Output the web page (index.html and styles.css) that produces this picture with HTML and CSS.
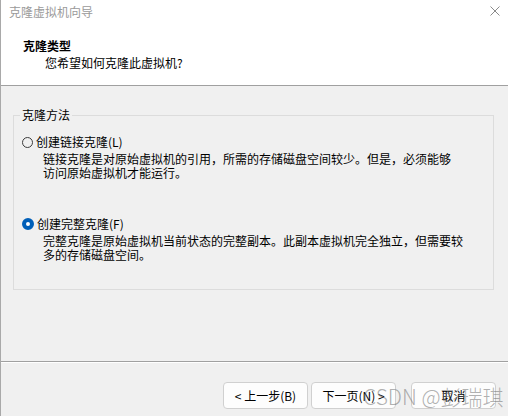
FILE: index.html
```html
<!DOCTYPE html>
<html lang="zh-CN">
<head>
    <meta charset="UTF-8">
    <title>克隆虚拟机向导</title>
    <link rel="stylesheet" href="styles.css">
</head>
<body>
    <div class="window">
        <div class="header">
            <div class="titlebar">
                <span class="title">克隆虚拟机向导</span>
                <svg class="close" width="10" height="10" viewBox="0 0 10 10">
                    <path d="M0.5 0.5 L9.5 9.5 M9.5 0.5 L0.5 9.5" stroke="#8a8a8a" stroke-width="1" fill="none"/>
                </svg>
            </div>
            <div class="heading">
                <div class="heading-title">克隆类型</div>
                <div class="heading-sub">您希望如何克隆此虚拟机?</div>
            </div>
        </div>

        <div class="content">
            <fieldset class="group">
                <legend>克隆方法</legend>

                <div class="option">
                    <div class="radio-row">
                        <span class="radio"></span>
                        <span>创建链接克隆(L)</span>
                    </div>
                    <div class="desc">链接克隆是对原始虚拟机的引用，所需的存储磁盘空间较少。但是，必须能够<br>访问原始虚拟机才能运行。</div>
                </div>

                <div class="option second">
                    <div class="radio-row">
                        <span class="radio checked"></span>
                        <span>创建完整克隆(F)</span>
                    </div>
                    <div class="desc">完整克隆是原始虚拟机当前状态的完整副本。此副本虚拟机完全独立，但需要较<br>多的存储磁盘空间。</div>
                </div>
            </fieldset>
        </div>

        <div class="footer">
            <button class="btn">&lt; 上一步(B)</button>
            <button class="btn">下一页(N) &gt;</button>
            <button class="btn cancel">取消</button>
            <span class="watermark">CSDN @彭瑞琪</span>
        </div>
    </div>
</body>
</html>
```

FILE: styles.css
```css
html, body {
    margin: 0;
    padding: 0;
}
body {
    width: 508px;
    height: 416px;
    overflow: hidden;
    background: #f0f0f0;
    font-family: "Noto Sans CJK SC", "Liberation Sans", sans-serif;
    font-size: 12px;
    color: #000;
}
.window {
    position: relative;
    display: flex;
    flex-direction: column;
    height: 416px;
    border-left: 1px solid #a9a9a9;
    box-sizing: border-box;
}
.header {
    height: 85px;
    background: #fff;
    border-bottom: 1px solid #a0a0a0;
    flex-shrink: 0;
}
.titlebar {
    display: flex;
    align-items: center;
    justify-content: space-between;
    height: 24px;
    padding: 0 8px 0 8px;
}
.title {
    color: #9a9a9a;
    line-height: 24px;
}
.close {
    margin-top: -2px;
}
.heading {
    padding: 14px 0 0 22px;
    line-height: 16px;
}
.heading-title {
    font-weight: bold;
}
.heading-sub {
    margin-left: 22px;
    margin-top: 1px;
}
.content {
    flex: 1;
    padding: 21px 14px 0 12px;
}
.group {
    margin: 0;
    padding: 11px 0 27px 0;
    border: 1px solid #dcdcdc;
}
.group legend {
    margin-left: 6px;
    padding: 0 2px;
    line-height: 16px;
}
.option {
    padding-left: 8px;
}
.option.second {
    margin-top: 36px;
}
.radio-row {
    display: flex;
    align-items: center;
    gap: 3px;
    line-height: 16px;
}
.radio {
    width: 11px;
    height: 11px;
    border: 1px solid #3c3c3c;
    border-radius: 50%;
    box-sizing: border-box;
}
.radio.checked {
    width: 12px;
    height: 12px;
    border: 4px solid #005fb8;
    background: #fff;
}
.desc {
    margin-top: 2px;
    padding-left: 21px;
    line-height: 14px;
}
.footer {
    position: relative;
    height: 55px;
    display: flex;
    justify-content: flex-end;
    align-items: flex-start;
    gap: 3px;
    padding: 20px 12px 0 0;
    box-sizing: border-box;
    border-top: 1px solid #a0a0a0;
    box-shadow: inset 0 1px 0 #fff;
    flex-shrink: 0;
}
.btn {
    width: 85px;
    height: 27px;
    background: #fdfdfd;
    border: 1px solid #d0d0d0;
    border-radius: 4px;
    font-family: "Noto Sans CJK SC", "Liberation Sans", sans-serif;
    font-size: 12px;
    color: #000;
    padding: 0;
}
.btn.cancel {
    margin-left: 12px;
}
.watermark {
    position: absolute;
    left: 362px;
    top: 19px;
    font-family: "Noto Sans CJK SC", sans-serif;
    font-size: 21px;
    font-weight: 300;
    color: rgba(110, 110, 110, 0.55);
    white-space: nowrap;
    pointer-events: none;
}
```
